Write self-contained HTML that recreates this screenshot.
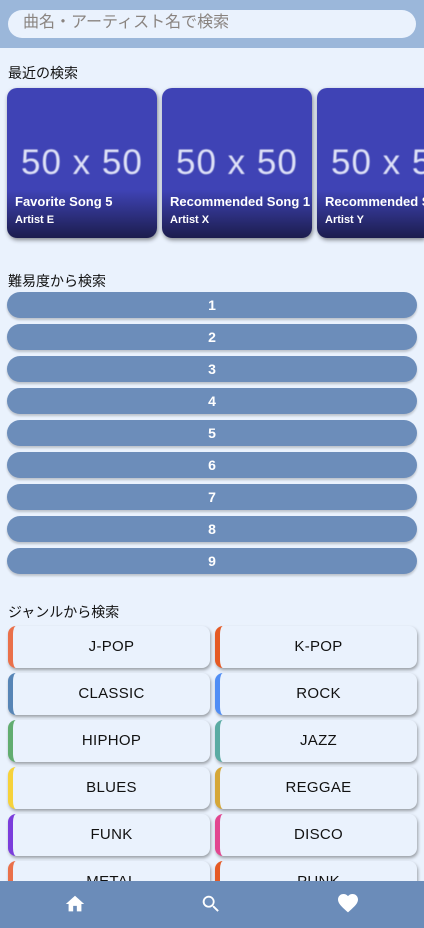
<!DOCTYPE html><html style="overflow:hidden"><head><style>
*{box-sizing:border-box;margin:0;padding:0}
html,body{width:424px;height:928px;overflow:hidden}
body{background:#eaf2fd;font-family:"Liberation Sans","Noto Sans CJK JP",sans-serif;position:relative}
.wrap{position:absolute;left:0;top:0;width:424px;height:928px;overflow:hidden}
.hdr{position:absolute;top:0;left:0;width:424px;height:48px;background:#9bb7da}
.search{position:absolute;left:8px;top:10px;width:408px;height:28px;border-radius:14px;background:#eaf2fd;color:#8a8480;font-size:16px;line-height:26px;padding-left:15px}
h2{position:absolute;left:8px;font-size:14px;font-weight:normal;color:#111}
.card{position:absolute;top:88px;width:150px;height:150px;border-radius:10px;background:linear-gradient(#3f43b5 0,#3f43b5 68%,#1c1d4d 100%);box-shadow:1px 2px 4px rgba(0,0,0,.45);overflow:hidden;color:#fff}
.card .ph{position:absolute;top:55px;left:14px;font-size:35px;color:#dfe2f7;letter-spacing:1px;white-space:nowrap;filter:blur(.6px)}
.card .t{position:absolute;left:8px;top:106px;font-size:13px;font-weight:bold;white-space:nowrap}
.card .a{position:absolute;left:8px;top:126px;font-size:11px;font-weight:bold}
.bar{position:absolute;left:7px;width:410px;height:26px;border-radius:13px;background:#6c8dba;color:#fff;font-weight:bold;font-size:14px;text-align:center;line-height:26px;box-shadow:0 2px 2px rgba(0,0,0,.2)}
.g{position:absolute;width:202px;height:42px;border-radius:8px;background:#eaf2fd;box-shadow:1px 2px 3px rgba(0,0,0,.35);border-left:5px solid;text-align:center;line-height:42px;font-size:15px;color:#111;letter-spacing:.3px}
.nav{position:absolute;top:881px;left:0;width:424px;height:47px;background:#6b8cb9}
</style></head><body><div class="wrap">
<div class="hdr"><div class="search">曲名・アーティスト名で検索</div></div>
<h2 style="top:63px">最近の検索</h2>
<div class="card" style="left:7px"><div class="ph">50 x 50</div><div class="t">Favorite Song 5</div><div class="a">Artist E</div></div>
<div class="card" style="left:162px"><div class="ph">50 x 50</div><div class="t">Recommended Song 1</div><div class="a">Artist X</div></div>
<div class="card" style="left:317px;width:107px;border-radius:10px 0 0 10px"><div class="ph">50 x 50</div><div class="t">Recommended Song 2</div><div class="a">Artist Y</div></div>
<h2 style="top:271px">難易度から検索</h2>
<div class="bar" style="top:292px">1</div><div class="bar" style="top:324px">2</div><div class="bar" style="top:356px">3</div><div class="bar" style="top:388px">4</div><div class="bar" style="top:420px">5</div><div class="bar" style="top:452px">6</div><div class="bar" style="top:484px">7</div><div class="bar" style="top:516px">8</div><div class="bar" style="top:548px">9</div>
<h2 style="top:602px">ジャンルから検索</h2>
<div class="g" style="left:8px;top:626px;border-color:#ea704a">J-POP</div><div class="g" style="left:215px;top:626px;border-color:#e55a24">K-POP</div>
<div class="g" style="left:8px;top:673px;border-color:#5785b6">CLASSIC</div><div class="g" style="left:215px;top:673px;border-color:#4f8df5">ROCK</div>
<div class="g" style="left:8px;top:720px;border-color:#62ad70">HIPHOP</div><div class="g" style="left:215px;top:720px;border-color:#5aaba3">JAZZ</div>
<div class="g" style="left:8px;top:767px;border-color:#f6d23b">BLUES</div><div class="g" style="left:215px;top:767px;border-color:#d5a738">REGGAE</div>
<div class="g" style="left:8px;top:814px;border-color:#7b3ddc">FUNK</div><div class="g" style="left:215px;top:814px;border-color:#e24690">DISCO</div>
<div class="g" style="left:8px;top:861px;border-color:#ea704a">METAL</div><div class="g" style="left:215px;top:861px;border-color:#e55a24">PUNK</div>
<div class="nav">
<svg style="position:absolute;left:64px;top:12px" width="22" height="22" viewBox="0 0 24 24"><path d="M10 20v-6h4v6h5v-8h3L12 3 2 12h3v8z" fill="#fff"/></svg>
<svg style="position:absolute;left:200px;top:12px" width="22" height="22" viewBox="0 0 24 24"><path d="M15.5 14h-.8l-.3-.3A6.5 6.5 0 1 0 9.5 16a6.5 6.5 0 0 0 4.2-1.6l.3.3v.8l5 5 1.5-1.5-5-5zm-6 0A4.5 4.5 0 1 1 14 9.5 4.5 4.5 0 0 1 9.5 14z" fill="#fff"/></svg>
<svg style="position:absolute;left:336px;top:10px" width="24" height="24" viewBox="0 0 24 24"><path d="M12 21.4l-1.5-1.3C5.4 15.4 2 12.3 2 8.5 2 5.4 4.4 3 7.5 3c1.7 0 3.4.8 4.5 2.1C13.1 3.8 14.8 3 16.5 3 19.6 3 22 5.4 22 8.5c0 3.8-3.4 6.9-8.5 11.5z" fill="#fff"/></svg>
</div>
</div></body></html>
